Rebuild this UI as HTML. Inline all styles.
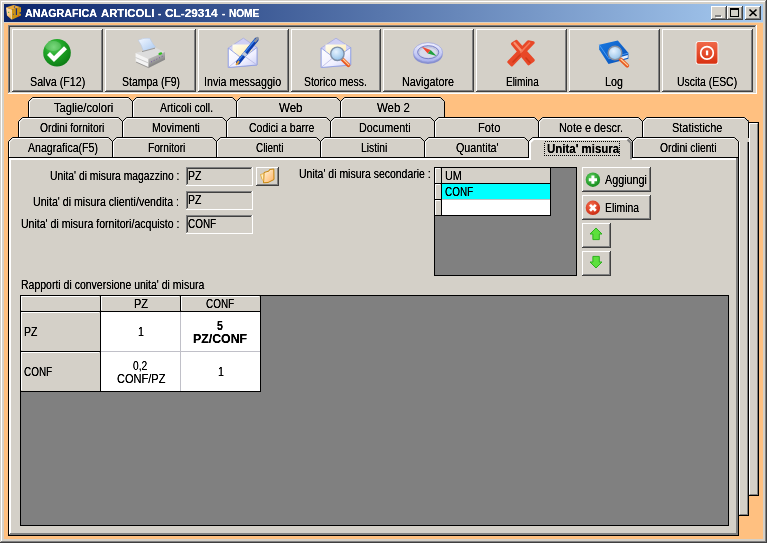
<!DOCTYPE html>
<html lang="it"><head><meta charset="utf-8"><title>ANAGRAFICA ARTICOLI - CL-29314 - NOME</title>
<style>
html,body{margin:0;padding:0}
body{width:767px;height:543px;position:relative;overflow:hidden;background:#d4d0c8;font-family:"Liberation Sans",sans-serif;font-size:12px;line-height:13px;color:#000}
#frame{position:absolute;left:0;top:0}
#txt{position:absolute;left:0;top:0;width:767px;height:543px;will-change:transform;filter:url(#tf)}
.t{position:absolute;white-space:nowrap;height:13px;line-height:13px;transform-origin:0 0}
.b{font-weight:bold}
.i{position:absolute;overflow:visible}
</style></head><body>
<svg width="0" height="0" style="position:absolute"><filter id="tf" x="0" y="0" width="100%" height="100%" color-interpolation-filters="sRGB"><feComponentTransfer><feFuncA type="table" tableValues="0 0.3 0.75 1 1"/></feComponentTransfer></filter></svg>
<svg id="frame" width="767" height="543" viewBox="0 0 767 543" shape-rendering="crispEdges">
<rect x="0" y="0" width="767" height="543" fill="#d4d0c8"/>
<rect x="0" y="542" width="767" height="1" fill="#404040"/>
<rect x="766" y="0" width="1" height="543" fill="#404040"/>
<rect x="1" y="541" width="765" height="1" fill="#808080"/>
<rect x="765" y="1" width="1" height="541" fill="#808080"/>
<rect x="1" y="1" width="764" height="1" fill="#ffffff"/>
<rect x="1" y="1" width="1" height="540" fill="#ffffff"/>
<rect x="4" y="23" width="759" height="516" fill="#ffc080"/>
<rect x="8" y="25" width="749" height="69" fill="#d4d0c8"/>
<rect x="8" y="25" width="749" height="1" fill="#808080"/>
<rect x="8" y="25" width="1" height="69" fill="#808080"/>
<rect x="9" y="26" width="747" height="1" fill="#404040"/>
<rect x="9" y="26" width="1" height="67" fill="#404040"/>
<rect x="8" y="93" width="749" height="1" fill="#ffffff"/>
<rect x="756" y="25" width="1" height="69" fill="#ffffff"/>
<rect x="9" y="92" width="747" height="1" fill="#d4d0c8"/>
<rect x="755" y="26" width="1" height="67" fill="#d4d0c8"/>
<rect x="12" y="29" width="91" height="63" fill="#d4d0c8"/>
<rect x="12" y="91" width="91" height="1" fill="#404040"/>
<rect x="102" y="29" width="1" height="63" fill="#404040"/>
<rect x="13" y="90" width="89" height="1" fill="#808080"/>
<rect x="101" y="30" width="1" height="61" fill="#808080"/>
<rect x="12" y="29" width="90" height="1" fill="#ffffff"/>
<rect x="12" y="29" width="1" height="62" fill="#ffffff"/>
<rect x="105" y="29" width="91" height="63" fill="#d4d0c8"/>
<rect x="105" y="91" width="91" height="1" fill="#404040"/>
<rect x="195" y="29" width="1" height="63" fill="#404040"/>
<rect x="106" y="90" width="89" height="1" fill="#808080"/>
<rect x="194" y="30" width="1" height="61" fill="#808080"/>
<rect x="105" y="29" width="90" height="1" fill="#ffffff"/>
<rect x="105" y="29" width="1" height="62" fill="#ffffff"/>
<rect x="198" y="29" width="91" height="63" fill="#d4d0c8"/>
<rect x="198" y="91" width="91" height="1" fill="#404040"/>
<rect x="288" y="29" width="1" height="63" fill="#404040"/>
<rect x="199" y="90" width="89" height="1" fill="#808080"/>
<rect x="287" y="30" width="1" height="61" fill="#808080"/>
<rect x="198" y="29" width="90" height="1" fill="#ffffff"/>
<rect x="198" y="29" width="1" height="62" fill="#ffffff"/>
<rect x="291" y="29" width="90" height="63" fill="#d4d0c8"/>
<rect x="291" y="91" width="90" height="1" fill="#404040"/>
<rect x="380" y="29" width="1" height="63" fill="#404040"/>
<rect x="292" y="90" width="88" height="1" fill="#808080"/>
<rect x="379" y="30" width="1" height="61" fill="#808080"/>
<rect x="291" y="29" width="89" height="1" fill="#ffffff"/>
<rect x="291" y="29" width="1" height="62" fill="#ffffff"/>
<rect x="383" y="29" width="91" height="63" fill="#d4d0c8"/>
<rect x="383" y="91" width="91" height="1" fill="#404040"/>
<rect x="473" y="29" width="1" height="63" fill="#404040"/>
<rect x="384" y="90" width="89" height="1" fill="#808080"/>
<rect x="472" y="30" width="1" height="61" fill="#808080"/>
<rect x="383" y="29" width="90" height="1" fill="#ffffff"/>
<rect x="383" y="29" width="1" height="62" fill="#ffffff"/>
<rect x="476" y="29" width="91" height="63" fill="#d4d0c8"/>
<rect x="476" y="91" width="91" height="1" fill="#404040"/>
<rect x="566" y="29" width="1" height="63" fill="#404040"/>
<rect x="477" y="90" width="89" height="1" fill="#808080"/>
<rect x="565" y="30" width="1" height="61" fill="#808080"/>
<rect x="476" y="29" width="90" height="1" fill="#ffffff"/>
<rect x="476" y="29" width="1" height="62" fill="#ffffff"/>
<rect x="569" y="29" width="91" height="63" fill="#d4d0c8"/>
<rect x="569" y="91" width="91" height="1" fill="#404040"/>
<rect x="659" y="29" width="1" height="63" fill="#404040"/>
<rect x="570" y="90" width="89" height="1" fill="#808080"/>
<rect x="658" y="30" width="1" height="61" fill="#808080"/>
<rect x="569" y="29" width="90" height="1" fill="#ffffff"/>
<rect x="569" y="29" width="1" height="62" fill="#ffffff"/>
<rect x="662" y="29" width="91" height="63" fill="#d4d0c8"/>
<rect x="662" y="91" width="91" height="1" fill="#404040"/>
<rect x="752" y="29" width="1" height="63" fill="#404040"/>
<rect x="663" y="90" width="89" height="1" fill="#808080"/>
<rect x="751" y="30" width="1" height="61" fill="#808080"/>
<rect x="662" y="29" width="90" height="1" fill="#ffffff"/>
<rect x="662" y="29" width="1" height="62" fill="#ffffff"/>
<rect x="749" y="122" width="10" height="374" fill="#d4d0c8"/>
<rect x="749" y="122" width="10" height="1" fill="#000000"/>
<rect x="758" y="122" width="1" height="374" fill="#000000"/>
<rect x="749" y="495" width="10" height="1" fill="#000000"/>
<rect x="757" y="124" width="1" height="371" fill="#808080"/>
<rect x="750" y="494" width="8" height="1" fill="#808080"/>
<rect x="749" y="123" width="8" height="1" fill="#ffffff"/>
<rect x="749" y="123" width="1" height="371" fill="#ffffff"/>
<rect x="734" y="137" width="15" height="379" fill="#d4d0c8"/>
<rect x="748" y="120" width="1" height="396" fill="#000000"/>
<rect x="739" y="515" width="10" height="1" fill="#000000"/>
<rect x="747" y="121" width="1" height="394" fill="#808080"/>
<rect x="740" y="514" width="8" height="1" fill="#808080"/>
<rect x="739" y="138" width="1" height="376" fill="#ffffff"/>
<path d="M28,122 V101 L32,97 H129 L133,101 V122 Z" fill="#d4d0c8" shape-rendering="geometricPrecision"/>
<path d="M132,122 V101 L136,97 H233 L237,101 V122 Z" fill="#d4d0c8" shape-rendering="geometricPrecision"/>
<path d="M236,122 V101 L240,97 H337 L341,101 V122 Z" fill="#d4d0c8" shape-rendering="geometricPrecision"/>
<path d="M340,122 V101 L344,97 H441 L445,101 V122 Z" fill="#d4d0c8" shape-rendering="geometricPrecision"/>
<path d="M28.5,118 V101.5 L32.5,97.5 H128.5 L132.5,101.5 V118" fill="none" stroke="#000" stroke-width="1" shape-rendering="geometricPrecision"/>
<path d="M29.5,118 V102 L33,98.5 H128" fill="none" stroke="#fff" stroke-width="1" shape-rendering="geometricPrecision"/>
<path d="M132.5,118 V101.5 L136.5,97.5 H232.5 L236.5,101.5 V118" fill="none" stroke="#000" stroke-width="1" shape-rendering="geometricPrecision"/>
<path d="M133.5,118 V102 L137,98.5 H232" fill="none" stroke="#fff" stroke-width="1" shape-rendering="geometricPrecision"/>
<path d="M236.5,118 V101.5 L240.5,97.5 H336.5 L340.5,101.5 V118" fill="none" stroke="#000" stroke-width="1" shape-rendering="geometricPrecision"/>
<path d="M237.5,118 V102 L241,98.5 H336" fill="none" stroke="#fff" stroke-width="1" shape-rendering="geometricPrecision"/>
<path d="M340.5,118 V101.5 L344.5,97.5 H440.5 L444.5,101.5 V118" fill="none" stroke="#000" stroke-width="1" shape-rendering="geometricPrecision"/>
<path d="M341.5,118 V102 L345,98.5 H440" fill="none" stroke="#fff" stroke-width="1" shape-rendering="geometricPrecision"/>
<path d="M18,142 V121 L22,117 H119 L123,121 V142 Z" fill="#d4d0c8" shape-rendering="geometricPrecision"/>
<path d="M122,142 V121 L126,117 H223 L227,121 V142 Z" fill="#d4d0c8" shape-rendering="geometricPrecision"/>
<path d="M226,142 V121 L230,117 H327 L331,121 V142 Z" fill="#d4d0c8" shape-rendering="geometricPrecision"/>
<path d="M330,142 V121 L334,117 H431 L435,121 V142 Z" fill="#d4d0c8" shape-rendering="geometricPrecision"/>
<path d="M434,142 V121 L438,117 H535 L539,121 V142 Z" fill="#d4d0c8" shape-rendering="geometricPrecision"/>
<path d="M538,142 V121 L542,117 H639 L643,121 V142 Z" fill="#d4d0c8" shape-rendering="geometricPrecision"/>
<path d="M642,142 V121 L646,117 H745 L749,121 V142 Z" fill="#d4d0c8" shape-rendering="geometricPrecision"/>
<path d="M18.5,138 V121.5 L22.5,117.5 H118.5 L122.5,121.5 V138" fill="none" stroke="#000" stroke-width="1" shape-rendering="geometricPrecision"/>
<path d="M19.5,138 V122 L23,118.5 H118" fill="none" stroke="#fff" stroke-width="1" shape-rendering="geometricPrecision"/>
<path d="M122.5,138 V121.5 L126.5,117.5 H222.5 L226.5,121.5 V138" fill="none" stroke="#000" stroke-width="1" shape-rendering="geometricPrecision"/>
<path d="M123.5,138 V122 L127,118.5 H222" fill="none" stroke="#fff" stroke-width="1" shape-rendering="geometricPrecision"/>
<path d="M226.5,138 V121.5 L230.5,117.5 H326.5 L330.5,121.5 V138" fill="none" stroke="#000" stroke-width="1" shape-rendering="geometricPrecision"/>
<path d="M227.5,138 V122 L231,118.5 H326" fill="none" stroke="#fff" stroke-width="1" shape-rendering="geometricPrecision"/>
<path d="M330.5,138 V121.5 L334.5,117.5 H430.5 L434.5,121.5 V138" fill="none" stroke="#000" stroke-width="1" shape-rendering="geometricPrecision"/>
<path d="M331.5,138 V122 L335,118.5 H430" fill="none" stroke="#fff" stroke-width="1" shape-rendering="geometricPrecision"/>
<path d="M434.5,138 V121.5 L438.5,117.5 H534.5 L538.5,121.5 V138" fill="none" stroke="#000" stroke-width="1" shape-rendering="geometricPrecision"/>
<path d="M435.5,138 V122 L439,118.5 H534" fill="none" stroke="#fff" stroke-width="1" shape-rendering="geometricPrecision"/>
<path d="M538.5,138 V121.5 L542.5,117.5 H638.5 L642.5,121.5 V138" fill="none" stroke="#000" stroke-width="1" shape-rendering="geometricPrecision"/>
<path d="M539.5,138 V122 L543,118.5 H638" fill="none" stroke="#fff" stroke-width="1" shape-rendering="geometricPrecision"/>
<path d="M642.5,138 V121.5 L646.5,117.5 H744.5 L748.5,121.5 V138" fill="none" stroke="#000" stroke-width="1" shape-rendering="geometricPrecision"/>
<path d="M643.5,138 V122 L647,118.5 H744" fill="none" stroke="#fff" stroke-width="1" shape-rendering="geometricPrecision"/>
<path d="M8,162 V141 L12,137 H109 L113,141 V162 Z" fill="#d4d0c8" shape-rendering="geometricPrecision"/>
<path d="M112,162 V141 L116,137 H213 L217,141 V162 Z" fill="#d4d0c8" shape-rendering="geometricPrecision"/>
<path d="M216,162 V141 L220,137 H317 L321,141 V162 Z" fill="#d4d0c8" shape-rendering="geometricPrecision"/>
<path d="M320,162 V141 L324,137 H421 L425,141 V162 Z" fill="#d4d0c8" shape-rendering="geometricPrecision"/>
<path d="M424,162 V141 L428,137 H525 L529,141 V162 Z" fill="#d4d0c8" shape-rendering="geometricPrecision"/>
<path d="M528,162 V141 L532,137 H629 L633,141 V162 Z" fill="#d4d0c8" shape-rendering="geometricPrecision"/>
<path d="M632,162 V141 L636,137 H735 L739,141 V162 Z" fill="#d4d0c8" shape-rendering="geometricPrecision"/>
<path d="M8.5,158 V141.5 L12.5,137.5 H108.5 L112.5,141.5 V158" fill="none" stroke="#000" stroke-width="1" shape-rendering="geometricPrecision"/>
<path d="M9.5,158 V142 L13,138.5 H108" fill="none" stroke="#fff" stroke-width="1" shape-rendering="geometricPrecision"/>
<path d="M112.5,158 V141.5 L116.5,137.5 H212.5 L216.5,141.5 V158" fill="none" stroke="#000" stroke-width="1" shape-rendering="geometricPrecision"/>
<path d="M113.5,158 V142 L117,138.5 H212" fill="none" stroke="#fff" stroke-width="1" shape-rendering="geometricPrecision"/>
<path d="M216.5,158 V141.5 L220.5,137.5 H316.5 L320.5,141.5 V158" fill="none" stroke="#000" stroke-width="1" shape-rendering="geometricPrecision"/>
<path d="M217.5,158 V142 L221,138.5 H316" fill="none" stroke="#fff" stroke-width="1" shape-rendering="geometricPrecision"/>
<path d="M320.5,158 V141.5 L324.5,137.5 H420.5 L424.5,141.5 V158" fill="none" stroke="#000" stroke-width="1" shape-rendering="geometricPrecision"/>
<path d="M321.5,158 V142 L325,138.5 H420" fill="none" stroke="#fff" stroke-width="1" shape-rendering="geometricPrecision"/>
<path d="M424.5,158 V141.5 L428.5,137.5 H524.5 L528.5,141.5 V158" fill="none" stroke="#000" stroke-width="1" shape-rendering="geometricPrecision"/>
<path d="M425.5,158 V142 L429,138.5 H524" fill="none" stroke="#fff" stroke-width="1" shape-rendering="geometricPrecision"/>
<path d="M528.5,158 V141.5 L532.5,137.5 H628.5 L632.5,141.5 V158" fill="none" stroke="#000" stroke-width="1" shape-rendering="geometricPrecision"/>
<path d="M529.5,158 V142 L533,138.5 H628" fill="none" stroke="#fff" stroke-width="1" shape-rendering="geometricPrecision"/>
<path d="M632.5,158 V141.5 L636.5,137.5 H734.5 L738.5,141.5 V158" fill="none" stroke="#000" stroke-width="1" shape-rendering="geometricPrecision"/>
<path d="M633.5,158 V142 L637,138.5 H734" fill="none" stroke="#fff" stroke-width="1" shape-rendering="geometricPrecision"/>
<rect x="8" y="157" width="731" height="379" fill="#d4d0c8"/>
<rect x="8" y="157" width="731" height="1" fill="#000000"/>
<rect x="8" y="157" width="1" height="379" fill="#000000"/>
<rect x="738" y="157" width="1" height="379" fill="#000000"/>
<rect x="8" y="535" width="731" height="1" fill="#000000"/>
<rect x="9" y="158" width="727" height="2" fill="#ffffff"/>
<rect x="9" y="158" width="2" height="375" fill="#ffffff"/>
<rect x="736" y="158" width="2" height="377" fill="#808080"/>
<rect x="9" y="533" width="729" height="2" fill="#808080"/>
<rect x="9" y="533" width="1" height="1" fill="#ffffff"/>
<rect x="529" y="157" width="103" height="3" fill="#d4d0c8"/>
<rect x="529" y="142" width="2" height="18" fill="#ffffff"/>
<rect x="533" y="138" width="95" height="2" fill="#ffffff"/>
<path d="M530,142.5 L533.5,139" stroke="#fff" stroke-width="2" fill="none" shape-rendering="geometricPrecision"/>
<rect x="630" y="142" width="2" height="17" fill="#808080"/>
<path d="M627.5,139.5 L631,143" stroke="#808080" stroke-width="2" fill="none" shape-rendering="geometricPrecision"/>
<rect x="544.5" y="141.5" width="75" height="14" fill="none" stroke="#000" stroke-width="1" stroke-dasharray="1 1"/>
<rect x="186" y="167" width="67" height="19" fill="#d4d0c8"/>
<rect x="186" y="167" width="67" height="1" fill="#808080"/>
<rect x="186" y="167" width="1" height="19" fill="#808080"/>
<rect x="187" y="168" width="65" height="1" fill="#404040"/>
<rect x="187" y="168" width="1" height="17" fill="#404040"/>
<rect x="186" y="185" width="67" height="1" fill="#ffffff"/>
<rect x="252" y="167" width="1" height="19" fill="#ffffff"/>
<rect x="187" y="184" width="65" height="1" fill="#d4d0c8"/>
<rect x="251" y="168" width="1" height="17" fill="#d4d0c8"/>
<rect x="186" y="191" width="67" height="19" fill="#d4d0c8"/>
<rect x="186" y="191" width="67" height="1" fill="#808080"/>
<rect x="186" y="191" width="1" height="19" fill="#808080"/>
<rect x="187" y="192" width="65" height="1" fill="#404040"/>
<rect x="187" y="192" width="1" height="17" fill="#404040"/>
<rect x="186" y="209" width="67" height="1" fill="#ffffff"/>
<rect x="252" y="191" width="1" height="19" fill="#ffffff"/>
<rect x="187" y="208" width="65" height="1" fill="#d4d0c8"/>
<rect x="251" y="192" width="1" height="17" fill="#d4d0c8"/>
<rect x="186" y="215" width="67" height="19" fill="#d4d0c8"/>
<rect x="186" y="215" width="67" height="1" fill="#808080"/>
<rect x="186" y="215" width="1" height="19" fill="#808080"/>
<rect x="187" y="216" width="65" height="1" fill="#404040"/>
<rect x="187" y="216" width="1" height="17" fill="#404040"/>
<rect x="186" y="233" width="67" height="1" fill="#ffffff"/>
<rect x="252" y="215" width="1" height="19" fill="#ffffff"/>
<rect x="187" y="232" width="65" height="1" fill="#d4d0c8"/>
<rect x="251" y="216" width="1" height="17" fill="#d4d0c8"/>
<rect x="256" y="167" width="23" height="19" fill="#d4d0c8"/>
<rect x="256" y="185" width="23" height="1" fill="#404040"/>
<rect x="278" y="167" width="1" height="19" fill="#404040"/>
<rect x="257" y="184" width="21" height="1" fill="#808080"/>
<rect x="277" y="168" width="1" height="17" fill="#808080"/>
<rect x="256" y="167" width="22" height="1" fill="#ffffff"/>
<rect x="256" y="167" width="1" height="18" fill="#ffffff"/>
<rect x="434" y="167" width="143" height="109" fill="#808080"/>
<rect x="434" y="167" width="143" height="1" fill="#000000"/>
<rect x="434" y="167" width="1" height="109" fill="#000000"/>
<rect x="434" y="275" width="143" height="1" fill="#000000"/>
<rect x="576" y="167" width="1" height="109" fill="#000000"/>
<rect x="435" y="168" width="6" height="47" fill="#d4d0c8"/>
<rect x="442" y="168" width="108" height="15" fill="#d4d0c8"/>
<rect x="442" y="184" width="108" height="15" fill="#00ffff"/>
<rect x="442" y="200" width="108" height="15" fill="#ffffff"/>
<rect x="441" y="168" width="1" height="48" fill="#000000"/>
<rect x="550" y="168" width="1" height="48" fill="#000000"/>
<rect x="435" y="183" width="116" height="1" fill="#000000"/>
<rect x="435" y="199" width="7" height="1" fill="#000000"/>
<rect x="442" y="199" width="108" height="1" fill="#c0c0c0"/>
<rect x="435" y="215" width="116" height="1" fill="#000000"/>
<rect x="435" y="168" width="5" height="1" fill="#ffffff"/>
<rect x="435" y="168" width="1" height="15" fill="#ffffff"/>
<rect x="435" y="184" width="5" height="1" fill="#ffffff"/>
<rect x="435" y="184" width="1" height="15" fill="#ffffff"/>
<rect x="435" y="200" width="5" height="1" fill="#ffffff"/>
<rect x="435" y="200" width="1" height="15" fill="#ffffff"/>
<rect x="582" y="167" width="69" height="25" fill="#d4d0c8"/>
<rect x="582" y="191" width="69" height="1" fill="#404040"/>
<rect x="650" y="167" width="1" height="25" fill="#404040"/>
<rect x="583" y="190" width="67" height="1" fill="#808080"/>
<rect x="649" y="168" width="1" height="23" fill="#808080"/>
<rect x="582" y="167" width="68" height="1" fill="#ffffff"/>
<rect x="582" y="167" width="1" height="24" fill="#ffffff"/>
<rect x="582" y="195" width="69" height="25" fill="#d4d0c8"/>
<rect x="582" y="219" width="69" height="1" fill="#404040"/>
<rect x="650" y="195" width="1" height="25" fill="#404040"/>
<rect x="583" y="218" width="67" height="1" fill="#808080"/>
<rect x="649" y="196" width="1" height="23" fill="#808080"/>
<rect x="582" y="195" width="68" height="1" fill="#ffffff"/>
<rect x="582" y="195" width="1" height="24" fill="#ffffff"/>
<rect x="582" y="223" width="29" height="25" fill="#d4d0c8"/>
<rect x="582" y="247" width="29" height="1" fill="#404040"/>
<rect x="610" y="223" width="1" height="25" fill="#404040"/>
<rect x="583" y="246" width="27" height="1" fill="#808080"/>
<rect x="609" y="224" width="1" height="23" fill="#808080"/>
<rect x="582" y="223" width="28" height="1" fill="#ffffff"/>
<rect x="582" y="223" width="1" height="24" fill="#ffffff"/>
<rect x="582" y="251" width="29" height="25" fill="#d4d0c8"/>
<rect x="582" y="275" width="29" height="1" fill="#404040"/>
<rect x="610" y="251" width="1" height="25" fill="#404040"/>
<rect x="583" y="274" width="27" height="1" fill="#808080"/>
<rect x="609" y="252" width="1" height="23" fill="#808080"/>
<rect x="582" y="251" width="28" height="1" fill="#ffffff"/>
<rect x="582" y="251" width="1" height="24" fill="#ffffff"/>
<rect x="20" y="295" width="709" height="231" fill="#808080"/>
<rect x="20" y="295" width="709" height="1" fill="#000000"/>
<rect x="20" y="295" width="1" height="231" fill="#000000"/>
<rect x="20" y="525" width="709" height="1" fill="#000000"/>
<rect x="728" y="295" width="1" height="231" fill="#000000"/>
<rect x="21" y="296" width="239" height="95" fill="#d4d0c8"/>
<rect x="101" y="312" width="159" height="79" fill="#ffffff"/>
<rect x="100" y="296" width="1" height="96" fill="#000000"/>
<rect x="180" y="296" width="1" height="16" fill="#000000"/>
<rect x="260" y="296" width="1" height="96" fill="#000000"/>
<rect x="21" y="311" width="240" height="1" fill="#000000"/>
<rect x="21" y="351" width="80" height="1" fill="#000000"/>
<rect x="21" y="391" width="240" height="1" fill="#000000"/>
<rect x="180" y="312" width="1" height="79" fill="#c0c0c8"/>
<rect x="101" y="351" width="159" height="1" fill="#c0c0c8"/>
<rect x="21" y="296" width="78" height="1" fill="#ffffff"/>
<rect x="21" y="296" width="1" height="14" fill="#ffffff"/>
<rect x="101" y="296" width="78" height="1" fill="#ffffff"/>
<rect x="101" y="296" width="1" height="14" fill="#ffffff"/>
<rect x="181" y="296" width="78" height="1" fill="#ffffff"/>
<rect x="181" y="296" width="1" height="14" fill="#ffffff"/>
<rect x="21" y="312" width="78" height="1" fill="#ffffff"/>
<rect x="21" y="312" width="1" height="38" fill="#ffffff"/>
<rect x="21" y="352" width="78" height="1" fill="#ffffff"/>
<rect x="21" y="352" width="1" height="38" fill="#ffffff"/>
</svg>
<div style="position:absolute;left:4px;top:4px;width:759px;height:18px;background:linear-gradient(to right,#0a246a,#a6caf0)"></div>
<svg class="i" style="left:0;top:0" width="767" height="100" viewBox="0 0 767 100">
<defs>
<radialGradient id="gGreen" cx="0.38" cy="0.3" r="0.75"><stop offset="0" stop-color="#5cd060"/><stop offset="0.45" stop-color="#1fa526"/><stop offset="1" stop-color="#0c7a14"/></radialGradient>
<linearGradient id="gPaper" x1="0" y1="0" x2="1" y2="1"><stop offset="0" stop-color="#f4f8ff"/><stop offset="1" stop-color="#a8c8f0"/></linearGradient>
<linearGradient id="gEnv" x1="0" y1="0" x2="1" y2="1"><stop offset="0" stop-color="#ffffff"/><stop offset="0.6" stop-color="#f0f0ff"/><stop offset="1" stop-color="#c8ccf4"/></linearGradient>
<linearGradient id="gLetter" x1="0" y1="0" x2="1" y2="1"><stop offset="0" stop-color="#fffef0"/><stop offset="1" stop-color="#ffe9a8"/></linearGradient>
<radialGradient id="gLens" cx="0.4" cy="0.35" r="0.7"><stop offset="0" stop-color="#e6f2ff"/><stop offset="1" stop-color="#8fbfe8"/></radialGradient>
<linearGradient id="gRed" x1="0" y1="0" x2="0" y2="1"><stop offset="0" stop-color="#f06848"/><stop offset="1" stop-color="#d83010"/></linearGradient>
<linearGradient id="gBook" x1="0" y1="0" x2="1" y2="1"><stop offset="0" stop-color="#1878e0"/><stop offset="1" stop-color="#0850b8"/></linearGradient>
<linearGradient id="gComp" x1="0" y1="0" x2="0" y2="1"><stop offset="0" stop-color="#f0f0ff"/><stop offset="1" stop-color="#a8b0ec"/></linearGradient>
<linearGradient id="gPrn" x1="0" y1="0" x2="0.5" y2="1"><stop offset="0" stop-color="#d0d0d0"/><stop offset="0.5" stop-color="#a8a8a8"/><stop offset="1" stop-color="#686868"/></linearGradient>
<linearGradient id="gBoxL" x1="0" y1="0" x2="0.6" y2="1"><stop offset="0" stop-color="#ffe0b0"/><stop offset="0.6" stop-color="#ffcc88"/><stop offset="1" stop-color="#e8a840"/></linearGradient>
</defs>
<!-- title icon -->
<g>
<path d="M6,7.6 L13.6,5 L21,7.2 L11.8,9.6 Z" fill="#e8a838"/>
<path d="M6,7.6 L11.8,9.6 L11.8,19.8 L7,15.6 Z" fill="url(#gBoxL)"/>
<path d="M11.8,9.6 L21,7.2 L21,15.4 L11.8,19.8 Z" fill="#cc9214"/>
<path d="M11.3,9.6 L11.3,19.2" stroke="#fff0c8" stroke-width="1" fill="none" opacity="0.8"/>
<path d="M16.4,8.4 L16.4,15" stroke="#14287a" stroke-width="1.1" fill="none"/>
<rect x="19.6" y="12.2" width="1.6" height="1.5" fill="#14287a"/>
<rect x="13.9" y="6.4" width="1.2" height="1.2" fill="#203080"/>
<rect x="8.2" y="11.8" width="1" height="1" fill="#18a028"/>
<rect x="17.9" y="15.7" width="1" height="1" fill="#e02018"/>
<rect x="13" y="13.8" width="1" height="1" fill="#404890"/>
</g>
<!-- caption buttons -->
<g shape-rendering="crispEdges">
<rect x="711" y="6" width="16" height="14" fill="#d4d0c8"/><rect x="711" y="6" width="15" height="1" fill="#fff"/><rect x="711" y="6" width="1" height="13" fill="#fff"/><rect x="726" y="6" width="1" height="14" fill="#404040"/><rect x="711" y="19" width="16" height="1" fill="#404040"/><rect x="725" y="7" width="1" height="12" fill="#808080"/><rect x="712" y="18" width="14" height="1" fill="#808080"/>
<rect x="727" y="6" width="16" height="14" fill="#d4d0c8"/><rect x="727" y="6" width="15" height="1" fill="#fff"/><rect x="727" y="6" width="1" height="13" fill="#fff"/><rect x="742" y="6" width="1" height="14" fill="#404040"/><rect x="727" y="19" width="16" height="1" fill="#404040"/><rect x="741" y="7" width="1" height="12" fill="#808080"/><rect x="728" y="18" width="14" height="1" fill="#808080"/>
<rect x="745" y="6" width="16" height="14" fill="#d4d0c8"/><rect x="745" y="6" width="15" height="1" fill="#fff"/><rect x="745" y="6" width="1" height="13" fill="#fff"/><rect x="760" y="6" width="1" height="14" fill="#404040"/><rect x="745" y="19" width="16" height="1" fill="#404040"/><rect x="759" y="7" width="1" height="12" fill="#808080"/><rect x="746" y="18" width="14" height="1" fill="#808080"/>
<rect x="716" y="16" width="6" height="2" fill="#fff"/><rect x="715" y="15" width="6" height="2" fill="#808080"/>
<rect x="730" y="8" width="9" height="9" fill="#000"/><rect x="731" y="10" width="7" height="6" fill="#d4d0c8"/>
</g>
<path d="M749.5,9.5 L756.5,16 M756.5,9.5 L749.5,16" stroke="#000" stroke-width="1.7" fill="none"/>

<!-- 1 Salva: green check -->
<circle cx="57" cy="52.7" r="13.8" fill="url(#gGreen)"/>
<ellipse cx="53" cy="46" rx="8" ry="5" fill="#fff" opacity="0.18"/>
<path d="M48.5,53.5 L54,59 L65.5,47.8" stroke="#fff" stroke-width="4.2" fill="none" stroke-linejoin="miter"/>

<!-- 2 Stampa: printer -->
<path d="M138.2,40.2 Q144,37.5 149.8,38.3 Q152,43 155.6,47.2 L143.4,51.3 Q142,45 138.2,40.2 Z" fill="url(#gPaper)" stroke="#b8c8e0" stroke-width="0.6"/>
<path d="M135.5,53 L155.5,47.8 L165,52 L148.5,59 Z" fill="#dcdcdc"/>
<path d="M135.5,53 L148.5,59 L148.5,67.3 L135.8,61.8 Z" fill="#f4f4f4"/>
<path d="M148.5,59 L165,52 L165,59.3 L148.5,67.6 Z" fill="url(#gPrn)"/>
<path d="M136,62 L148.5,67.6 L165,59.3" stroke="#808080" stroke-width="0.7" fill="none"/>
<path d="M135.6,57.5 L148.5,63" stroke="#c0c0c0" stroke-width="0.8" fill="none"/>
<path d="M142,51.6 L155,48.2" stroke="#909090" stroke-width="0.9" fill="none"/>
<path d="M151,62 L163,56" stroke="#7050a0" stroke-width="1" stroke-dasharray="1 2" fill="none"/>
<ellipse cx="160.3" cy="53.6" rx="2" ry="1.1" fill="#30c020" transform="rotate(-20 160.3 53.6)"/>

<!-- 3 Invia messaggio: envelope + pen -->
<path d="M228.3,48 L243.4,38.2 L257,47.5 L257,65 L228.3,67.5 Z" fill="#d0d0f4" stroke="#98a0e0" stroke-width="0.6"/>
<path d="M232.5,44.5 L252,44.5 L252,58 L232.5,58 Z" fill="url(#gLetter)"/>
<path d="M228.3,48 L242,58.5 L257,47.5 L257,65 L228.3,67.5 Z" fill="url(#gEnv)" stroke="#8898e0" stroke-width="0.8"/>
<path d="M228.3,67.5 L240.5,57.3 M257,65 L245,56.5" stroke="#b0b0e0" stroke-width="0.7" fill="none"/>
<path d="M238.2,62.3 L256.3,39.8" stroke="#0c3cac" stroke-width="4.3" stroke-linecap="round" fill="none"/>
<path d="M238.6,60.2 L254.8,40" stroke="#4088f0" stroke-width="1.3" stroke-linecap="round" fill="none"/>
<path d="M243.6,55.6 L245.8,52.9" stroke="#c0c8d8" stroke-width="4.3" fill="none"/>
<path d="M255.3,41 L257.6,38.2" stroke="#8890a0" stroke-width="2.6" stroke-linecap="round" fill="none"/>
<path d="M236.6,64.3 L238.6,61.7" stroke="#e0a040" stroke-width="2" stroke-linecap="round" fill="none"/>

<!-- 4 Storico mess.: envelope + magnifier -->
<path d="M321.2,48 L336,38.2 L350.7,47.5 L350.7,65 L321.2,67.5 Z" fill="#d0d0f4" stroke="#98a0e0" stroke-width="0.6"/>
<path d="M325.5,44.5 L346,44.5 L346,58 L325.5,58 Z" fill="url(#gLetter)"/>
<path d="M321.2,48 L335,58.5 L350.7,47.5 L350.7,65 L321.2,67.5 Z" fill="url(#gEnv)" stroke="#8898e0" stroke-width="0.8"/>
<path d="M321.2,67.5 L333.5,57.3 M350.7,65 L338.5,56.5" stroke="#b0b0e0" stroke-width="0.7" fill="none"/>
<path d="M342.5,59.3 L348.4,65.2" stroke="#e85820" stroke-width="3.9" stroke-linecap="round" fill="none"/>
<path d="M343.2,59.2 L348.9,64.9" stroke="#ffd098" stroke-width="1.3" stroke-linecap="round" fill="none"/>
<circle cx="337.4" cy="53.8" r="6.7" fill="url(#gLens)" stroke="#8090a8" stroke-width="1.4"/>

<!-- 5 Navigatore: compass -->
<ellipse cx="428" cy="54.6" rx="14.6" ry="9.4" fill="#8890d0"/>
<ellipse cx="428" cy="52.3" rx="14.6" ry="9.6" fill="url(#gComp)" stroke="#98a0e0" stroke-width="0.7"/>
<ellipse cx="428.2" cy="52.2" rx="10.6" ry="6.5" fill="#c4c8e0" stroke="#7880c8" stroke-width="1"/>
<ellipse cx="428.2" cy="52.8" rx="8.6" ry="4.9" fill="#d8dcec"/>
<path d="M421.8,46.8 L430.6,50 L427.8,53.4 Z" fill="#f04830"/>
<path d="M436.6,56 L427.8,53.4 L430.6,50 Z" fill="#20a040"/>

<!-- 6 Elimina: red X -->
<path d="M512.4,43.8 L516.5,41.4 L533.3,60.2 L528.6,63.9 Z" fill="#e84828" stroke="#e84828" stroke-width="3" stroke-linejoin="round"/>
<path d="M528.2,41.8 L533.2,42.8 L511.8,64.9 L508.8,62 Z" fill="#e84828" stroke="#e84828" stroke-width="3" stroke-linejoin="round"/>
<path d="M514.5,43 L521.5,51" stroke="#f89070" stroke-width="2.2" stroke-linecap="round" fill="none"/>
<path d="M529.5,43 L521,52" stroke="#f47858" stroke-width="1.8" stroke-linecap="round" fill="none"/>
<path d="M513,62 L520,55 M526,58 L530,62.5" stroke="#d03818" stroke-width="1.6" stroke-linecap="round" fill="none"/>

<!-- 7 Log: book + magnifier -->
<path d="M599.2,44.8 L617.8,40.6 L628.4,53 L628.4,58.8 L608.5,64 L599.2,49.6 Z" fill="url(#gBook)"/>
<path d="M599.2,44.8 L608.7,58.6 L628.4,53" stroke="#50a0f8" stroke-width="0.9" fill="none"/>
<path d="M620,57.3 L627.8,55 L627.8,57.8 L620,60 Z" fill="#e8eef8"/>
<path d="M620.4,59.2 L627.2,65.6" stroke="#e85820" stroke-width="3.9" stroke-linecap="round" fill="none"/>
<path d="M621,59.2 L627.6,65.4" stroke="#ffd098" stroke-width="1.3" stroke-linecap="round" fill="none"/>
<circle cx="615" cy="53" r="6.8" fill="url(#gLens)" stroke="#8890a0" stroke-width="1.4"/>

<!-- 8 Uscita: red power -->
<rect x="695.7" y="41.2" width="22.6" height="23.4" rx="2.5" fill="#fff"/>
<rect x="696.5" y="42" width="21" height="21.8" rx="2" fill="url(#gRed)"/>
<circle cx="707" cy="52.9" r="6.3" fill="none" stroke="#fff" stroke-width="1.7"/>
<rect x="705.9" y="50.5" width="2.3" height="4.8" fill="#fff"/>
</svg>
<svg class="i" style="left:250px;top:160px" width="420" height="120" viewBox="250 160 420 120">
<defs>
<linearGradient id="gFold" x1="0" y1="0" x2="1" y2="1"><stop offset="0" stop-color="#fff8e0"/><stop offset="1" stop-color="#ffb060"/></linearGradient>
<radialGradient id="gG2" cx="0.4" cy="0.35" r="0.7"><stop offset="0" stop-color="#60d060"/><stop offset="1" stop-color="#108818"/></radialGradient>
<radialGradient id="gR2" cx="0.4" cy="0.35" r="0.7"><stop offset="0" stop-color="#f87050"/><stop offset="1" stop-color="#c82810"/></radialGradient>
</defs>
<!-- folder -->
<path d="M264,172.5 L269,171 L269.5,169.5 L273.8,169 L274,179.5 L268,182.5 L263.5,182.8 Z" fill="url(#gFold)" stroke="#c8860a" stroke-width="1"/>
<path d="M260.5,174.5 L263.8,173.5 L263.6,181 L262,179.5 Z" fill="#fff0c0" stroke="#e0a030" stroke-width="0.8"/>
<!-- aggiungi -->
<circle cx="592.9" cy="179.7" r="7.2" fill="url(#gG2)"/>
<path d="M588.8,179.7 H597 M592.9,175.6 V183.8" stroke="#fff" stroke-width="3" fill="none"/>
<!-- elimina -->
<circle cx="592.9" cy="207.8" r="7.2" fill="url(#gR2)"/>
<path d="M590,204.9 L595.8,210.7 M595.8,204.9 L590,210.7" stroke="#fff" stroke-width="2.7" fill="none"/>
<!-- arrows -->
<path d="M596,228 L602,234 L599.3,234 L599.3,239.6 L592.9,239.6 L592.9,234 L590,234 Z" fill="#5ce03c" stroke="#2cb01c" stroke-width="1"/>
<path d="M596,268 L602,262 L599.3,262 L599.3,256.4 L592.9,256.4 L592.9,262 L590,262 Z" fill="#5ce03c" stroke="#2cb01c" stroke-width="1"/>
</svg>

<div id="txt">
<div class="t" id="t0" style="left:29.61px;top:76px;transform:scaleX(0.8917);">Salva (F12)</div>
<div class="t" id="t1" style="left:121.61px;top:76px;transform:scaleX(0.8711);">Stampa (F9)</div>
<div class="t" id="t2" style="left:204.20px;top:76px;transform:scaleX(0.8895);">Invia messaggio</div>
<div class="t" id="t3" style="left:303.85px;top:76px;transform:scaleX(0.8649);">Storico mess.</div>
<div class="t" id="t4" style="left:402.00px;top:76px;transform:scaleX(0.8948);">Navigatore</div>
<div class="t" id="t5" style="left:505.61px;top:76px;transform:scaleX(0.8306);">Elimina</div>
<div class="t" id="t6" style="left:605.42px;top:76px;transform:scaleX(0.8908);">Log</div>
<div class="t" id="t7" style="left:677.41px;top:76px;transform:scaleX(0.8666);">Uscita (ESC)</div>
<div class="t" id="t8" style="left:54.19px;top:102px;transform:scaleX(0.9363);">Taglie/colori</div>
<div class="t" id="t9" style="left:159.60px;top:102px;transform:scaleX(0.8751);">Articoli coll.</div>
<div class="t" id="t10" style="left:279.40px;top:102px;transform:scaleX(0.9618);">Web</div>
<div class="t" id="t11" style="left:377.00px;top:102px;transform:scaleX(0.9554);">Web 2</div>
<div class="t" id="t12" style="left:39.58px;top:122px;transform:scaleX(0.8537);">Ordini fornitori</div>
<div class="t" id="t13" style="left:151.59px;top:122px;transform:scaleX(0.8761);">Movimenti</div>
<div class="t" id="t14" style="left:249.20px;top:122px;transform:scaleX(0.8746);">Codici a barre</div>
<div class="t" id="t15" style="left:358.79px;top:122px;transform:scaleX(0.8984);">Documenti</div>
<div class="t" id="t16" style="left:477.98px;top:122px;transform:scaleX(0.9301);">Foto</div>
<div class="t" id="t17" style="left:559.40px;top:122px;transform:scaleX(0.9058);">Note e descr.</div>
<div class="t" id="t18" style="left:671.99px;top:122px;transform:scaleX(0.9114);">Statistiche</div>
<div class="t" id="t19" style="left:28.21px;top:142px;transform:scaleX(0.8810);">Anagrafica(F5)</div>
<div class="t" id="t20" style="left:148.19px;top:142px;transform:scaleX(0.8469);">Fornitori</div>
<div class="t" id="t21" style="left:255.83px;top:142px;transform:scaleX(0.8253);">Clienti</div>
<div class="t" id="t22" style="left:361.23px;top:142px;transform:scaleX(0.8604);">Listini</div>
<div class="t" id="t23" style="left:455.99px;top:142px;transform:scaleX(0.8949);">Quantita'</div>
<div class="t" id="t24" style="left:660.21px;top:142px;transform:scaleX(0.8558);">Ordini clienti</div>
<div class="t b" id="t25" style="left:546.59px;top:143px;transform:scaleX(0.9543);">Unita' misura</div>
<div class="t" id="t26" style="left:50.18px;top:170px;transform:scaleX(0.8607);">Unita' di misura magazzino :</div>
<div class="t" id="t27" style="left:33.01px;top:196px;transform:scaleX(0.8848);">Unita' di misura clienti/vendita :</div>
<div class="t" id="t28" style="left:21.41px;top:218px;transform:scaleX(0.8789);">Unita' di misura fornitori/acquisto :</div>
<div class="t" id="t29" style="left:188.02px;top:170px;transform:scaleX(0.8749);">PZ</div>
<div class="t" id="t30" style="left:188.02px;top:194px;transform:scaleX(0.8749);">PZ</div>
<div class="t" id="t31" style="left:188.04px;top:218px;transform:scaleX(0.8285);">CONF</div>
<div class="t" id="t32" style="left:298.59px;top:168px;transform:scaleX(0.8720);">Unita' di misura secondarie :</div>
<div class="t" id="t33" style="left:445.00px;top:170px;transform:scaleX(0.9000);">UM</div>
<div class="t" id="t34" style="left:445.04px;top:186px;transform:scaleX(0.8285);">CONF</div>
<div class="t" id="t35" style="left:605.00px;top:174px;transform:scaleX(0.8980);">Aggiungi</div>
<div class="t" id="t36" style="left:605.00px;top:202px;transform:scaleX(0.8641);">Elimina</div>
<div class="t" id="t37" style="left:21.21px;top:279px;transform:scaleX(0.8742);">Rapporti di conversione unita' di misura</div>
<div class="t" id="t38" style="left:24.42px;top:326px;transform:scaleX(0.8749);">PZ</div>
<div class="t" id="t39" style="left:24.43px;top:366px;transform:scaleX(0.8285);">CONF</div>
<div class="t" id="t40" style="left:134.17px;top:298px;transform:scaleX(0.9153);">PZ</div>
<div class="t" id="t41" style="left:206.18px;top:298px;transform:scaleX(0.8285);">CONF</div>
<div class="t" id="t42" style="left:138.16px;top:326px;transform:scaleX(0.8800);">1</div>
<div class="t" id="t43" style="left:217.96px;top:366px;transform:scaleX(0.8800);">1</div>
<div class="t b" id="t44" style="left:217.26px;top:320px;transform:scaleX(0.8800);">5</div>
<div class="t b" id="t45" style="left:193.41px;top:333px;transform:scaleX(1.0266);">PZ/CONF</div>
<div class="t" id="t46" style="left:133.43px;top:360px;transform:scaleX(0.8531);">0,2</div>
<div class="t" id="t47" style="left:117.00px;top:373px;transform:scaleX(0.9191);">CONF/PZ</div>
<div class="t b" id="t48" style="left:24.78px;top:7px;transform:scaleX(0.9723);color:#fff;font-size:11px;">ANAGRAFICA</div>
<div class="t b" id="t49" style="left:100.94px;top:7px;transform:scaleX(1.0264);color:#fff;font-size:11px;">ARTICOLI</div>
<div class="t b" id="t50" style="left:158.00px;top:7px;transform:scaleX(0.8800);color:#fff;font-size:11px;">-</div>
<div class="t b" id="t51" style="left:165.00px;top:7px;transform:scaleX(1.0740);color:#fff;font-size:11px;">CL-29314</div>
<div class="t b" id="t52" style="left:221.81px;top:7px;transform:scaleX(0.8800);color:#fff;font-size:11px;">-</div>
<div class="t b" id="t53" style="left:228.81px;top:7px;transform:scaleX(0.9163);color:#fff;font-size:11px;">NOME</div>
</div>
</body></html>
